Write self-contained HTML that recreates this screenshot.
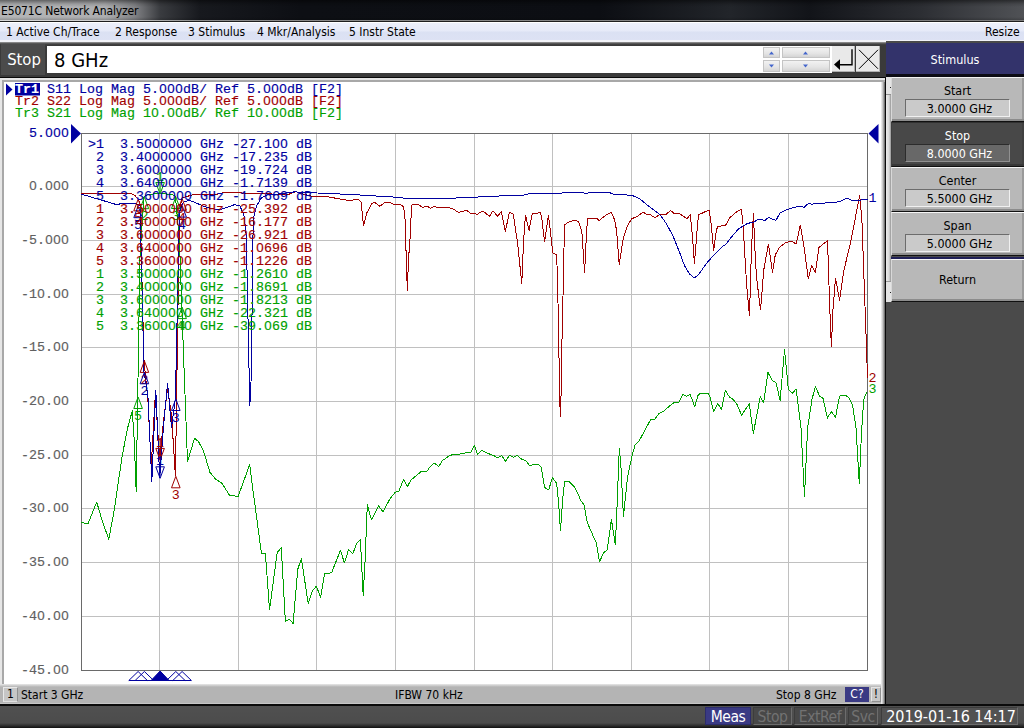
<!DOCTYPE html>
<html><head><meta charset="utf-8"><title>E5071C Network Analyzer</title>
<style>
html,body{margin:0;padding:0;}
body{width:1024px;height:728px;position:relative;overflow:hidden;background:#4a4a4a;font-family:"DejaVu Sans Condensed","Liberation Sans",sans-serif;font-size:12px;color:#000;}
.abs{position:absolute;}
#title{left:0;top:0;width:1024px;height:21px;background:linear-gradient(180deg,rgba(0,0,0,.45) 0,rgba(0,0,0,.12) 4px,rgba(0,0,0,0) 7px,rgba(0,0,0,0) 17px,rgba(0,0,0,.25) 21px),linear-gradient(90deg,#b4b5b7 0,#adaeb0 105px,#808184 135px,#3a3c40 160px,#17191e 200px,#0d0f14 300px,#0c0e13 600px,#22252a 730px,#121419 810px,#2c2e33 920px,#505256 1024px);}
#title span{position:absolute;left:1px;top:4px;font-size:12px;letter-spacing:-0.15px;color:#000;white-space:nowrap;}
#titleline{left:0;top:20px;width:1024px;height:2px;background:linear-gradient(180deg,rgba(0,0,0,0) 0,rgba(0,0,0,0) 1px,#1e1e1e 1px,#1e1e1e 2px),linear-gradient(90deg,#d6d6d6 0,#cccccc 120px,#8c8c8c 200px,#7c7c7c 100%);}
#menu{left:0;top:22px;width:1024px;height:20px;background:linear-gradient(180deg,#ffffff 0,#ffffff 1px,#eceffa 1px,#e6eaf8 9px,#dbe1f3 10px,#dde2f4 18px,#f2f3f8 18px,#f2f3f8 20px);}
#menu span{position:absolute;top:3px;font-size:12px;white-space:nowrap;color:#000;}
#entry{left:0;top:42px;width:886px;height:36px;background:linear-gradient(180deg,#a4a4a4 0,#6a6a6a 1px,#454545 2px,#3a3a3a 3px,#3a3a3a 100%);}
#stoplab{left:1px;top:44px;width:44px;height:31px;background:#4b4b4b;color:#fff;font-size:16.5px;line-height:31px;text-align:center;text-indent:2px;}
#inp{left:47px;top:46px;width:785px;height:27px;background:#fff;}
#inp span{position:absolute;left:7px;top:1px;font-size:20px;line-height:26px;color:#000;}
.mono{-webkit-text-stroke:0.15px currentColor;font-family:"Liberation Mono","DejaVu Sans Mono",monospace;font-size:13.33px;white-space:pre;line-height:12px;}
#panel{left:0;top:78px;width:885px;height:606px;background:#e6e6e6;}
#white{left:4px;top:82px;width:877px;height:602px;background:#fff;}
#pin{left:2px;top:80px;width:883px;height:604px;background:#a8a8a8;}
#pr{left:881px;top:82px;width:4px;height:622px;background:linear-gradient(90deg,#f4f4f4,#d0d0d0 35%,#8a8a8a 80%,#505050);}
#prb{left:885px;top:77px;width:1px;height:628px;background:#0a0a0a;}
#ptop{left:0;top:77px;width:886px;height:1px;background:#0a0a0a;}
#side{left:886px;top:41px;width:138px;height:663px;background:#4a4a4a;}
.z{font-family:"Liberation Sans",sans-serif;font-style:normal;display:inline-block;width:8px;text-align:center;}
.mt{stroke-width:0.15px;font-family:"Liberation Mono","DejaVu Sans Mono",monospace;font-size:13.33px;}

#shead{left:886px;top:43px;width:138px;height:31px;background:#33336b;color:#fff;font-size:12.5px;line-height:33px;text-align:center;}
#sheadline{left:886px;top:74px;width:138px;height:3px;background:#0c0c14;}
#strip{left:886px;top:77px;width:5px;height:225px;background:#e4e4e4;}
#thumb{left:886px;top:94px;width:5px;height:188px;background:linear-gradient(90deg,#ececec,#d8d8d8 60%,#bcbcbc 80%,#8e8e8e);border-top:1px solid #909090;border-bottom:1px solid #9a9a9a;box-sizing:border-box;}
.sk{left:891px;width:133px;height:45px;box-sizing:border-box;background:#b8b8b8;border-top:1px solid #f4f4f4;border-left:1px solid #d8d8d8;border-bottom:1px solid #101010;box-shadow:inset 0 -2px 0 #8c8c8c, inset -2px 0 0 #9a9a9a;text-align:center;font-size:12.4px;color:#000;}
.sk .l{position:absolute;left:0;width:131px;top:5px;line-height:16px;}
.sk .v{position:absolute;left:13px;top:21px;width:105px;height:18px;box-sizing:border-box;background:#cacaca;border-top:1px solid #6c6c6c;border-left:1px solid #6c6c6c;border-bottom:1px solid #f0f0f0;border-right:1px solid #f0f0f0;line-height:18px;padding-left:4px;}
.sk.on{background:#484848;color:#fff;border-top-color:#303030;border-left-color:#404040;box-shadow:inset 0 -2px 0 #383838, inset -2px 0 0 #404040;}
.sk.on .v{background:#686868;border-top-color:#2c2c2c;border-left-color:#2c2c2c;border-bottom-color:#909090;border-right-color:#909090;}
#sep{left:891px;top:257px;width:133px;height:2px;background:#202058;}

.spin{background:linear-gradient(180deg,#f2f2f2 0,#e4e4e4 60%,#d4d4d4 100%);border:1px solid #c4c4c4;box-sizing:border-box;}
.kb{background:#e9e9e9;box-sizing:border-box;border-right:1px solid #b0b0b0;border-bottom:1px solid #b0b0b0;}

#status{left:0;top:684px;width:882px;height:20px;background:linear-gradient(180deg,#e8e8e8 0,#b4b4b4 3px,#b4b4b4 19px,#c6c6c6 19px,#c6c6c6 20px);}
#status span{position:absolute;top:4px;font-size:12px;line-height:15px;white-space:nowrap;}
#sb1{left:3px;top:687px;width:15px;height:15px;box-sizing:border-box;background:#c6c6c6;border-top:1px solid #e8e8e8;border-left:1px solid #e8e8e8;border-bottom:1px solid #e0e0e0;border-right:1px solid #909090;font-size:12px;line-height:13px;text-align:center;}
#bottom{left:0;top:704px;width:1024px;height:24px;background:linear-gradient(180deg,#0a0a0a 0,#0a0a0a 1.5px,#505050 2px,#4c4c4c 19px,#2a2a2a 22px,#101010 24px);}
.bb{top:707px;height:18px;padding-top:1px;box-sizing:border-box;font-size:15.5px;letter-spacing:-0.45px;line-height:17px;text-align:center;color:#727272;background:#484848;border:1px solid #3c3c3c;border-right-color:#6c6c6c;border-bottom-color:#6c6c6c;white-space:nowrap;}
</style></head><body>
<div id="title" class="abs"><span>E5071C Network Analyzer</span></div>
<div id="titleline" class="abs"></div>
<div id="menu" class="abs">
<span style="left:6px">1 Active Ch/Trace</span>
<span style="left:115px">2 Response</span>
<span style="left:188px">3 Stimulus</span>
<span style="left:257px">4 Mkr/Analysis</span>
<span style="left:349px">5 Instr State</span>
<span style="left:985px">Resize</span>
</div>
<div id="entry" class="abs"></div>
<div id="stoplab" class="abs">Stop</div>
<div id="inp" class="abs"><span>8 GHz</span></div>
<div id="panel" class="abs"></div>
<div id="pin" class="abs"></div><div id="white" class="abs"></div><div id="ptop" class="abs"></div>
<div id="status" class="abs"><span style="left:21px">Start 3 GHz</span><span style="left:395px">IFBW 70 kHz</span><span style="left:776px">Stop 8 GHz</span></div>
<div id="side" class="abs"></div><div id="pr" class="abs"></div><div id="prb" class="abs"></div>
<div id="bottom" class="abs"></div>
<!--PLOT-->
<svg class="abs" style="left:0;top:0" width="1024" height="728" viewBox="0 0 1024 728" shape-rendering="auto">
<path d="M159.5 133.5V670.5M81.5 186.5H867.5M238.5 133.5V670.5M81.5 240.5H867.5M316.5 133.5V670.5M81.5 294.5H867.5M395.5 133.5V670.5M81.5 347.5H867.5M474.5 133.5V670.5M81.5 401.5H867.5M552.5 133.5V670.5M81.5 455.5H867.5M631.5 133.5V670.5M81.5 508.5H867.5M709.5 133.5V670.5M81.5 562.5H867.5M788.5 133.5V670.5M81.5 616.5H867.5" stroke="#c0c0c0" stroke-width="1" fill="none" shape-rendering="crispEdges"/>
<rect x="81.5" y="133.5" width="786.0" height="537.0" fill="none" stroke="#6a6a6a" stroke-width="1" shape-rendering="crispEdges"/>
<polyline points="81.3,522.4 87.9,524.0 96.7,502.0 102.2,520.7 108.8,539.3 114.3,509.7 122.0,457.0 127.5,428.4 132.3,410.8 134.2,440.0 136.2,492.0 137.7,397.0 140.0,256.0 144.0,196.7 147.9,194.3 159.7,193.6 171.5,194.3 175.4,196.4 179.4,240.0 183.4,351.0 187.5,461.8 194.5,438.2 198.4,441.5 203.3,450.3 209.9,472.3 215.4,478.9 222.0,483.3 229.6,495.4 238.2,496.3 249.7,464.7 252.5,486.7 261.5,554.0 265.4,553.2 269.5,609.8 277.2,552.6 281.3,547.7 285.4,621.3 289.6,619.4 293.1,623.5 297.8,569.1 301.4,558.7 308.2,603.5 312.4,590.5 316.5,586.2 320.6,598.0 324.5,574.0 331.6,572.7 340.4,550.4 344.5,563.0 348.6,549.3 352.7,554.0 356.9,543.0 360.4,539.5 363.2,595.2 365.1,560.9 367.3,504.6 371.4,519.7 378.8,505.9 383.0,512.0 389.8,499.0 395.3,492.2 398.9,491.1 403.6,479.3 407.5,486.4 411.1,479.8 415.5,476.3 420.9,471.8 426.8,471.3 430.7,466.1 434.3,463.2 438.8,466.4 442.3,460.7 448.6,456.3 453.0,454.3 462.0,453.9 466.4,452.5 470.9,452.1 474.5,445.4 477.5,454.3 482.0,450.4 487.9,453.4 494.1,455.7 497.7,458.0 501.6,455.4 505.4,461.4 509.3,455.4 513.4,457.1 517.3,455.4 521.8,459.3 525.9,460.7 529.8,466.1 533.4,464.3 537.9,464.3 541.1,466.8 544.6,487.5 548.6,490.0 552.5,477.5 556.6,483.4 558.4,500.4 560.5,530.7 562.9,496.8 564.6,481.6 568.9,481.2 574.1,486.4 577.5,492.7 580.7,500.5 584.0,504.7 587.2,522.2 591.1,531.3 596.3,543.0 599.4,561.8 603.6,553.0 607.3,549.6 611.4,519.6 615.4,544.9 617.2,502.6 619.3,448.4 621.1,468.7 623.4,516.2 627.6,477.0 631.5,458.3 634.9,445.2 639.4,440.5 645.9,428.3 650.6,419.7 655.0,419.1 658.9,413.4 664.1,410.8 669.4,406.1 674.6,402.2 678.5,403.0 682.9,394.3 686.3,396.2 690.2,394.3 694.7,406.9 698.1,395.1 700.7,393.0 708.0,393.0 709.8,396.2 713.7,411.8 717.6,403.5 721.5,409.2 725.4,390.4 729.4,397.0 733.3,399.6 737.2,404.9 741.6,415.2 749.3,403.8 753.3,433.5 760.3,396.7 763.6,402.7 768.0,372.5 772.4,380.7 775.7,382.2 777.4,388.4 780.1,400.5 784.5,349.9 788.4,389.5 792.6,393.2 796.1,388.8 801.0,428.0 804.5,496.6 807.6,428.0 812.0,399.4 815.3,386.6 819.7,396.1 823.0,398.3 827.4,418.1 831.3,411.5 835.5,417.4 839.5,396.1 845.0,395.0 849.4,398.3 852.7,406.0 856.0,428.0 859.3,483.4 861.5,432.4 863.7,399.4 867.0,391.7" fill="none" stroke="#00a000" stroke-width="1" stroke-linejoin="round" shape-rendering="crispEdges"/>
<polyline points="81.0,193.6 130.7,193.6 135.0,195.5 137.7,198.7 140.0,203.0 144.0,360.2 147.9,400.0 151.2,466.0 155.3,395.0 159.7,459.1 163.6,420.0 167.6,388.0 171.5,415.0 175.4,475.5 179.4,215.0 181.7,198.1 191.8,195.0 218.0,194.0 226.0,192.0 240.0,192.0 244.0,193.9 269.7,193.9 287.8,194.7 296.0,191.4 299.3,193.0 312.5,196.4 325.7,196.4 338.8,198.8 348.7,200.5 358.6,199.3 361.0,202.0 363.6,226.0 366.9,212.8 371.8,203.8 374.3,202.0 379.7,206.2 385.0,202.5 390.7,203.0 395.8,205.0 398.7,204.3 402.3,205.3 403.7,207.5 405.0,219.0 406.3,259.4 407.3,290.6 408.5,259.4 410.2,236.3 411.6,205.3 413.8,204.3 418.0,204.3 422.9,207.8 425.3,206.3 427.8,206.3 430.4,208.6 434.0,206.3 437.6,207.5 448.4,207.5 452.7,208.6 458.5,212.5 465.0,210.7 467.0,210.7 470.7,213.3 474.3,213.3 477.2,214.4 481.6,211.5 484.4,212.2 489.5,216.4 493.0,210.7 497.4,216.4 501.3,211.8 505.3,231.7 509.4,212.2 513.3,214.0 517.6,243.5 521.8,283.5 522.9,256.5 524.4,227.7 525.5,215.4 529.1,230.3 532.3,213.3 534.5,214.0 540.2,212.2 541.7,217.6 544.6,242.0 548.4,215.4 550.3,230.6 552.8,252.9 556.5,255.0 557.5,275.0 559.7,395.0 560.3,417.0 561.2,391.0 561.9,344.7 563.0,296.4 564.0,247.9 564.7,224.8 568.3,222.2 572.7,220.7 576.3,220.2 578.4,221.9 580.6,227.0 582.0,233.4 584.6,273.0 585.6,250.7 586.7,229.0 587.8,218.3 596.5,218.3 599.3,220.5 605.0,215.8 611.3,212.2 614.5,219.7 616.6,230.6 619.2,264.4 623.1,239.2 627.5,225.5 631.5,219.0 638.3,215.8 643.0,212.2 646.6,214.2 650.7,214.8 654.8,217.8 659.8,214.5 666.4,214.2 670.5,210.4 673.8,213.2 679.6,213.7 687.0,218.6 690.3,214.5 692.4,236.0 694.4,263.6 696.9,232.6 698.5,214.8 703.5,212.5 709.2,210.0 711.2,224.4 713.7,250.8 715.8,233.5 717.5,226.5 725.7,225.2 729.8,217.8 735.6,212.5 741.4,209.2 743.0,224.4 745.5,265.6 746.5,282.9 749.4,315.8 750.6,281.2 751.3,252.4 753.4,213.7 754.7,245.0 756.4,276.3 760.5,310.0 763.8,269.7 768.4,244.1 772.5,272.1 775.3,254.8 779.4,247.4 786.0,242.5 791.8,241.3 796.2,244.1 800.3,225.0 804.2,248.2 808.3,278.7 811.6,265.5 815.4,272.1 819.0,247.4 826.4,241.6 827.5,240.3 828.0,254.8 829.7,305.9 831.4,346.8 833.0,309.2 835.5,278.2 839.6,300.2 843.7,271.3 851.1,240.0 859.7,195.3 861.9,219.5 863.8,273.0 866.0,334.0 867.5,378.0" fill="none" stroke="#a00000" stroke-width="1" stroke-linejoin="round" shape-rendering="crispEdges"/>
<polyline points="81.0,194.0 116.5,204.6 122.0,203.5 136.0,203.8 140.0,206.0 144.0,371.6 147.9,395.0 151.8,482.0 155.8,390.0 159.7,477.4 163.6,425.0 167.6,383.0 171.5,428.0 175.4,398.3 179.4,212.0 181.7,205.0 184.3,201.3 190.4,200.6 207.0,207.5 219.3,210.0 234.4,204.7 240.0,206.0 244.0,215.7 246.3,235.0 249.8,406.0 251.0,382.0 252.4,290.0 253.2,219.4 256.5,206.0 261.4,198.0 268.0,194.7 273.0,194.7 294.4,191.9 317.4,193.0 355.0,194.7 395.7,197.2 406.6,198.4 454.9,198.4 457.0,197.4 476.5,197.4 480.0,196.4 498.0,196.4 501.0,195.5 522.6,195.5 526.0,194.5 530.9,193.4 561.0,193.4 564.0,192.3 582.0,192.3 584.2,193.0 587.8,193.0 590.0,192.3 608.7,192.3 614.5,194.5 626.0,194.5 627.5,195.5 632.5,195.5 639.7,198.8 649.9,207.1 659.8,214.5 666.4,223.6 673.0,236.0 679.6,252.4 684.5,265.6 689.4,273.8 694.4,278.0 698.5,274.7 706.0,264.0 712.5,256.5 722.4,246.6 725.7,244.5 732.3,236.0 738.9,228.5 747.1,223.6 753.7,222.0 758.7,219.1 762.0,219.4 764.4,221.0 768.6,217.3 771.9,219.0 776.0,220.3 780.0,212.9 785.0,210.4 789.9,208.5 799.8,206.0 804.2,207.4 808.6,203.2 811.9,204.4 815.2,203.5 824.0,203.3 826.2,202.4 836.0,202.2 841.5,200.8 847.0,198.2 851.4,200.2 860.2,200.2 862.4,199.3 867.7,199.3" fill="none" stroke="#0000a0" stroke-width="1" stroke-linejoin="round" shape-rendering="crispEdges"/>
<rect x="15" y="83" width="25" height="12.5" fill="#0000a0"/>
<path d="M71 124V143.5L81 133.5Z" fill="#0000a0"/>
<path d="M878.5 124V143.5L868.5 133.5Z" fill="#0000a0"/>
<path d="M6 83.5V95.5L12.5 89.5Z" fill="#0000a0"/>
<path d="M138.1 397.0L133.8 408.5H142.4Z" fill="none" stroke="#00a000" stroke-width="1"/><text x="134.1" y="420.0" fill="#00a000" class="mt">5</text>
<path d="M182.1 307.1L177.8 318.6H186.4Z" fill="none" stroke="#00a000" stroke-width="1"/><text x="178.1" y="330.1" fill="#00a000" class="mt">4</text>
<path d="M175.8 197.0L171.5 208.5H180.1Z" fill="none" stroke="#00a000" stroke-width="1"/><text x="171.8" y="220.0" fill="#00a000" class="mt">3</text>
<path d="M144.4 197.2L140.1 208.7H148.7Z" fill="none" stroke="#00a000" stroke-width="1"/><text x="140.4" y="220.2" fill="#00a000" class="mt">2</text>
<path d="M160.1 194.0L155.8 182.5H164.4Z" fill="none" stroke="#00a000" stroke-width="1"/><path d="M160.1 183.0V192.0" stroke="#00a000" stroke-width="1"/><text x="156.1" y="181.0" fill="#00a000" class="mt">1</text>
<path d="M138.1 199.3L133.8 210.8H142.4Z" fill="none" stroke="#a00000" stroke-width="1"/><text x="134.1" y="222.3" fill="#a00000" class="mt">5</text>
<path d="M182.1 198.7L177.8 210.2H186.4Z" fill="none" stroke="#a00000" stroke-width="1"/><text x="178.1" y="221.7" fill="#a00000" class="mt">4</text>
<path d="M175.8 476.3L171.5 487.8H180.1Z" fill="none" stroke="#a00000" stroke-width="1"/><text x="171.8" y="499.3" fill="#a00000" class="mt">3</text>
<path d="M144.4 360.9L140.1 372.4H148.7Z" fill="none" stroke="#a00000" stroke-width="1"/><text x="140.4" y="383.9" fill="#a00000" class="mt">2</text>
<path d="M160.1 459.9L155.8 448.4H164.4Z" fill="none" stroke="#a00000" stroke-width="1"/><path d="M160.1 448.9V457.9" stroke="#a00000" stroke-width="1"/><text x="156.1" y="446.9" fill="#a00000" class="mt">1</text>
<path d="M138.1 206.2L133.8 217.7H142.4Z" fill="none" stroke="#0000a0" stroke-width="1"/><text x="134.1" y="229.2" fill="#0000a0" class="mt">5</text>
<path d="M182.1 205.6L177.8 217.1H186.4Z" fill="none" stroke="#0000a0" stroke-width="1"/><text x="178.1" y="228.6" fill="#0000a0" class="mt">4</text>
<path d="M175.8 399.0L171.5 410.5H180.1Z" fill="none" stroke="#0000a0" stroke-width="1"/><text x="171.8" y="422.0" fill="#0000a0" class="mt">3</text>
<path d="M144.4 372.3L140.1 383.8H148.7Z" fill="none" stroke="#0000a0" stroke-width="1"/><text x="140.4" y="395.3" fill="#0000a0" class="mt">2</text>
<path d="M160.1 478.3L155.8 466.8H164.4Z" fill="none" stroke="#0000a0" stroke-width="1"/><path d="M160.1 467.3V476.3" stroke="#0000a0" stroke-width="1"/><text x="156.1" y="465.3" fill="#0000a0" class="mt">1</text>
<path d="M138.1 671.5L128.8 680.5H147.4Z" fill="none" stroke="#0000a0" stroke-width="1"/>
<path d="M144.4 671.5L135.1 680.5H153.7Z" fill="none" stroke="#0000a0" stroke-width="1"/>
<path d="M182.1 671.5L172.8 680.5H191.4Z" fill="none" stroke="#0000a0" stroke-width="1"/>
<path d="M175.8 671.5L166.5 680.5H185.1Z" fill="none" stroke="#0000a0" stroke-width="1"/>
<path d="M160.1 671L151.1 680.5H169.1Z" fill="#0000a0" stroke="#0000a0" stroke-width="1"/>
<text x="868.5" y="201.8" fill="#0000a0" class="mt">1</text>
<text x="868.5" y="381.5" fill="#a00000" class="mt">2</text>
<text x="868.5" y="392.5" fill="#00a000" class="mt">3</text>
</svg>
<div class="abs mono" style="left:15px;top:83px;color:#0000a0;"><span style="color:#fff;font-weight:bold">Tr1</span> S11 Log Mag 5.<i class="z">0</i><i class="z">0</i><i class="z">0</i>dB/ Ref 5.<i class="z">0</i><i class="z">0</i><i class="z">0</i>dB [F2]</div>
<div class="abs mono" style="left:15px;top:95px;color:#a00000;">Tr2 S22 Log Mag 5.<i class="z">0</i><i class="z">0</i><i class="z">0</i>dB/ Ref 5.<i class="z">0</i><i class="z">0</i><i class="z">0</i>dB [F2]</div>
<div class="abs mono" style="left:15px;top:107px;color:#00a000;">Tr3 S21 Log Mag 1<i class="z">0</i>.<i class="z">0</i><i class="z">0</i>dB/ Ref 1<i class="z">0</i>.<i class="z">0</i><i class="z">0</i>dB [F2]</div>
<div class="abs mono" style="left:13px;width:56px;text-align:right;top:127.0px;color:#0000a0">5.<i class="z">0</i><i class="z">0</i><i class="z">0</i></div>
<div class="abs mono" style="left:13px;width:56px;text-align:right;top:180.0px;color:#606060"><i class="z">0</i>.<i class="z">0</i><i class="z">0</i><i class="z">0</i></div>
<div class="abs mono" style="left:13px;width:56px;text-align:right;top:234.0px;color:#606060">-5.<i class="z">0</i><i class="z">0</i><i class="z">0</i></div>
<div class="abs mono" style="left:13px;width:56px;text-align:right;top:288.0px;color:#606060">-1<i class="z">0</i>.<i class="z">0</i><i class="z">0</i></div>
<div class="abs mono" style="left:13px;width:56px;text-align:right;top:341.0px;color:#606060">-15.<i class="z">0</i><i class="z">0</i></div>
<div class="abs mono" style="left:13px;width:56px;text-align:right;top:395.0px;color:#606060">-2<i class="z">0</i>.<i class="z">0</i><i class="z">0</i></div>
<div class="abs mono" style="left:13px;width:56px;text-align:right;top:449.0px;color:#606060">-25.<i class="z">0</i><i class="z">0</i></div>
<div class="abs mono" style="left:13px;width:56px;text-align:right;top:502.0px;color:#606060">-3<i class="z">0</i>.<i class="z">0</i><i class="z">0</i></div>
<div class="abs mono" style="left:13px;width:56px;text-align:right;top:556.0px;color:#606060">-35.<i class="z">0</i><i class="z">0</i></div>
<div class="abs mono" style="left:13px;width:56px;text-align:right;top:610.0px;color:#606060">-4<i class="z">0</i>.<i class="z">0</i><i class="z">0</i></div>
<div class="abs mono" style="left:13px;width:56px;text-align:right;top:664.0px;color:#606060">-45.<i class="z">0</i><i class="z">0</i></div>
<div class="abs mono" style="left:88px;top:138px;color:#0000a0;">&gt;1  3.5<i class="z">0</i><i class="z">0</i><i class="z">0</i><i class="z">0</i><i class="z">0</i><i class="z">0</i> GHz -27.1<i class="z">0</i><i class="z">0</i> dB</div>
<div class="abs mono" style="left:88px;top:151px;color:#0000a0;"> 2  3.4<i class="z">0</i><i class="z">0</i><i class="z">0</i><i class="z">0</i><i class="z">0</i><i class="z">0</i> GHz -17.235 dB</div>
<div class="abs mono" style="left:88px;top:164px;color:#0000a0;"> 3  3.6<i class="z">0</i><i class="z">0</i><i class="z">0</i><i class="z">0</i><i class="z">0</i><i class="z">0</i> GHz -19.724 dB</div>
<div class="abs mono" style="left:88px;top:177px;color:#0000a0;"> 4  3.64<i class="z">0</i><i class="z">0</i><i class="z">0</i><i class="z">0</i><i class="z">0</i> GHz -1.7139 dB</div>
<div class="abs mono" style="left:88px;top:190px;color:#0000a0;"> 5  3.36<i class="z">0</i><i class="z">0</i><i class="z">0</i><i class="z">0</i><i class="z">0</i> GHz -1.7669 dB</div>
<div class="abs mono" style="left:88px;top:203px;color:#a00000;"> 1  3.5<i class="z">0</i><i class="z">0</i><i class="z">0</i><i class="z">0</i><i class="z">0</i><i class="z">0</i> GHz -25.392 dB</div>
<div class="abs mono" style="left:88px;top:216px;color:#a00000;"> 2  3.4<i class="z">0</i><i class="z">0</i><i class="z">0</i><i class="z">0</i><i class="z">0</i><i class="z">0</i> GHz -16.177 dB</div>
<div class="abs mono" style="left:88px;top:229px;color:#a00000;"> 3  3.6<i class="z">0</i><i class="z">0</i><i class="z">0</i><i class="z">0</i><i class="z">0</i><i class="z">0</i> GHz -26.921 dB</div>
<div class="abs mono" style="left:88px;top:242px;color:#a00000;"> 4  3.64<i class="z">0</i><i class="z">0</i><i class="z">0</i><i class="z">0</i><i class="z">0</i> GHz -1.<i class="z">0</i>696 dB</div>
<div class="abs mono" style="left:88px;top:255px;color:#a00000;"> 5  3.36<i class="z">0</i><i class="z">0</i><i class="z">0</i><i class="z">0</i><i class="z">0</i> GHz -1.1226 dB</div>
<div class="abs mono" style="left:88px;top:268px;color:#00a000;"> 1  3.5<i class="z">0</i><i class="z">0</i><i class="z">0</i><i class="z">0</i><i class="z">0</i><i class="z">0</i> GHz -1.261<i class="z">0</i> dB</div>
<div class="abs mono" style="left:88px;top:281px;color:#00a000;"> 2  3.4<i class="z">0</i><i class="z">0</i><i class="z">0</i><i class="z">0</i><i class="z">0</i><i class="z">0</i> GHz -1.8691 dB</div>
<div class="abs mono" style="left:88px;top:294px;color:#00a000;"> 3  3.6<i class="z">0</i><i class="z">0</i><i class="z">0</i><i class="z">0</i><i class="z">0</i><i class="z">0</i> GHz -1.8213 dB</div>
<div class="abs mono" style="left:88px;top:307px;color:#00a000;"> 4  3.64<i class="z">0</i><i class="z">0</i><i class="z">0</i><i class="z">0</i><i class="z">0</i> GHz -22.321 dB</div>
<div class="abs mono" style="left:88px;top:320px;color:#00a000;"> 5  3.36<i class="z">0</i><i class="z">0</i><i class="z">0</i>4<i class="z">0</i> GHz -39.<i class="z">0</i>69 dB</div>
<!--/PLOT-->
<!--ENTRY-->
<div class="abs spin" style="left:763px;top:47px;width:17px;height:11px"></div>
<div class="abs spin" style="left:763px;top:60px;width:17px;height:12px"></div>
<div class="abs spin" style="left:782px;top:47px;width:48px;height:11px"></div>
<div class="abs spin" style="left:782px;top:60px;width:48px;height:12px"></div>
<div class="abs kb" style="left:832px;top:46px;width:23px;height:26px"></div>
<div class="abs kb" style="left:856px;top:46px;width:24px;height:26px"></div>
<svg class="abs" style="left:760px;top:44px" width="124" height="32" viewBox="760 44 124 32">
<path d="M769 54.5h5l-2.5-3zM769 64.5h5l-2.5 3zM803 54.5h5l-2.5-3zM803 64.5h5l-2.5 3z" fill="#4466cc"/>
<path d="M852 49.3V64.8H839" fill="none" stroke="#000" stroke-width="1.4"/>
<path d="M834 64.6L840 59.2V70Z" fill="#000"/>
<path d="M859 49.8L878 68.8M878 49.8L859 68.8" stroke="#000" stroke-width="1" fill="none"/>
</svg>
<!--/ENTRY-->
<!--SIDE-->
<div id="shead" class="abs">Stimulus</div><div id="sheadline" class="abs"></div>
<div id="strip" class="abs"></div><div class="abs" style="left:890px;top:87px;width:1px;height:1px;background:#222"></div><div class="abs" style="left:890px;top:292px;width:1px;height:1px;background:#222"></div><div id="thumb" class="abs"></div>
<div class="abs sk" style="top:77px"><div class="l">Start</div><div class="v">3.0000 GHz</div></div>
<div class="abs sk on" style="top:122px"><div class="l">Stop</div><div class="v">8.0000 GHz</div></div>
<div class="abs sk" style="top:167px"><div class="l">Center</div><div class="v">5.5000 GHz</div></div>
<div class="abs sk" style="top:212px;height:44px"><div class="l">Span</div><div class="v">5.0000 GHz</div></div>
<div id="sep" class="abs"></div>
<div class="abs sk" style="top:259px;height:43px"><div class="l" style="top:12px">Return</div></div>
<!--/SIDE-->
<!--STATUS-->
<div id="sb1" class="abs">1</div>
<div class="abs" style="left:845px;top:687px;width:24px;height:15px;background:#3a3a84;color:#fff;font-size:12px;line-height:15px;text-align:center">C?</div>
<div class="abs" style="left:871px;top:687px;width:10px;height:15px;box-sizing:border-box;background:#c6c6c6;border:1px solid #e4e4e4;border-right-color:#909090;border-bottom-color:#909090;font-size:12px;line-height:13px;text-align:center">!</div>
<div class="abs bb" style="left:705px;width:46px;background:#3a3a84;color:#fff;border-color:#2c2c6c">Meas</div>
<div class="abs bb" style="left:753px;width:39px">Stop</div>
<div class="abs bb" style="left:794px;width:52px">ExtRef</div>
<div class="abs bb" style="left:848px;width:30px">Svc</div>
<div class="abs bb" style="left:881px;width:137px;color:#fff;background:#525252;font-size:16px;letter-spacing:0;text-indent:3px;padding-top:0">2019-01-16 14:17</div>
<!--/STATUS-->
</body></html>
